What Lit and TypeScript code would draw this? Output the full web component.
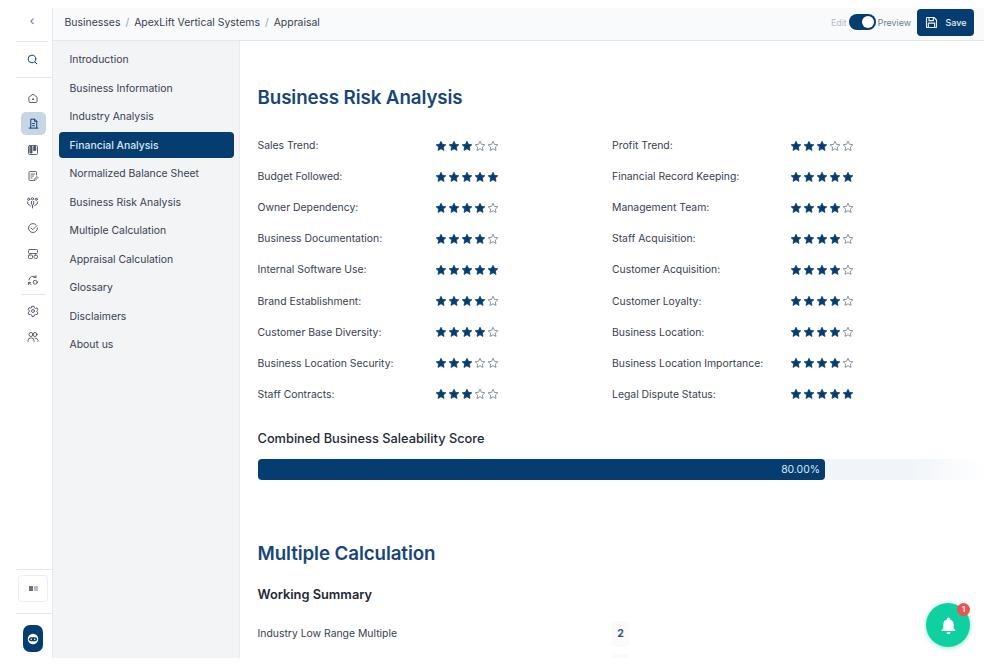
import { LitElement, html, css, svg } from "lit";
import { customElement } from "lit/decorators.js";

const NAV = ["Introduction","Business Information","Industry Analysis","Financial Analysis","Normalized Balance Sheet","Business Risk Analysis","Multiple Calculation","Appraisal Calculation","Glossary","Disclaimers","About us"];
const RISKS: [string, number, string, number][] = [
  ["Sales Trend:",3,"Profit Trend:",3],
  ["Budget Followed:",5,"Financial Record Keeping:",5],
  ["Owner Dependency:",4,"Management Team:",4],
  ["Business Documentation:",4,"Staff Acquisition:",4],
  ["Internal Software Use:",5,"Customer Acquisition:",4],
  ["Brand Establishment:",4,"Customer Loyalty:",4],
  ["Customer Base Diversity:",4,"Business Location:",4],
  ["Business Location Security:",3,"Business Location Importance:",4],
  ["Staff Contracts:",3,"Legal Dispute Status:",5],
];
const STAR = "M12 2.5l2.9 6.2 6.8.8-5 4.7 1.3 6.7-6-3.4-6 3.4 1.3-6.7-5-4.7 6.8-.8z";

const ico = (body: unknown, size = 13) => html`<svg width=${size} height=${size} viewBox="0 0 24 24" fill="none" stroke="currentColor" stroke-width="1.8" stroke-linecap="round" stroke-linejoin="round">${body}</svg>`;

const ICONS = {
  home: svg`<path d="M4 10.5 12 4l8 6.5V19a2 2 0 0 1-2 2H6a2 2 0 0 1-2-2z"/><circle cx="12" cy="14.5" r="1.2" fill="currentColor"/>`,
  doc: svg`<path d="M7 20V4h7l4 4v12"/><path d="M14 4v4h4"/><path d="M4 20.5h16"/><path d="M10.5 12h3M10.5 16h3"/>`,
  kanban: svg`<rect x="3" y="3" width="18" height="18" rx="2"/><rect x="6.5" y="5" width="3.5" height="13" fill="currentColor"/><rect x="14" y="5" width="3.5" height="8" fill="currentColor"/>`,
  edit: svg`<path d="M19 10V5a2 2 0 0 0-2-2H6a2 2 0 0 0-2 2v14a2 2 0 0 0 2 2h5"/><path d="M8 8h7M8 12h5M8 16h2"/><path d="m14 19 6-6 2 2-6 6h-2z"/>`,
  team: svg`<circle cx="5" cy="6" r="2"/><circle cx="12" cy="5" r="2"/><circle cx="19" cy="6" r="2"/><path d="M3 11v3l5 4M10 10v5l2 2v5M14 10v5l-2 2M21 11v3l-5 4"/>`,
  check: svg`<path d="M21 12a9 9 0 1 1-3.5-7.1"/><path d="m8 12 3.500 3.500L20 7"/>`,
  layout: svg`<rect x="3" y="3" width="18" height="8" rx="2"/><rect x="3" y="14" width="8" height="7" rx="1.500"/><rect x="14" y="14" width="7" height="7" rx="3"/>`,
  refresh: svg`<path d="M4 12a8 8 0 0 1 14-5"/><path d="M18 3v4h-4"/><path d="M3 21v-4h4"/><path d="M3 17a8 8 0 0 0 5 4"/><circle cx="16.500" cy="16.500" r="4"/>`,
  gear: svg`<circle cx="12" cy="12" r="3"/><path d="M10 2.500h4l.6 3 2.500 1.400 2.900-1 2 3.500-2.300 2 .1 1.300-.1 1.300 2.300 2-2 3.500-2.900-1-2.500 1.400-.6 3h-4l-.6-3-2.500-1.400-2.900 1-2-3.500 2.300-2L4.200 12l.1-1.300-2.300-2 2-3.500 2.900 1 2.500-1.400z"/>`,
  users: svg`<circle cx="8" cy="7" r="4"/><circle cx="16" cy="7" r="4"/><path d="M2 21v-2a5 5 0 0 1 5-5h2a5 5 0 0 1 5 5v2"/><path d="M16 14a6 6 0 0 1 6 5v2"/>`,
};

@customElement("app-root")
export class AppRoot extends LitElement {
  static styles = css`
    :host { display: block; width: 1000px; height: 666px; overflow: hidden; background: #fff; font-family: Inter, "Liberation Sans", sans-serif; color: #374151; font-size: 11px; }
    * { box-sizing: border-box; }
    .frame { display: flex; height: 666px; padding: 8px 16px; }
    .rail { width: 37px; flex: none; display: flex; flex-direction: column; align-items: stretch; border-right: 1px solid #e5e7eb; color: #4b5563; }
    .cell { height: 26px; display: flex; align-items: center; justify-content: center; padding-right: 3px; }
    .back { height: 34px; border-bottom: 1px solid #e5e7eb; margin-right: 4px; padding: 0 0 8px; color: #6b7280; font-size: 12px; }
    .search { height: 36px; border-bottom: 1px solid #e5e7eb; color: #0f3f6e; }
    .group { display: flex; flex-direction: column; padding-top: 7px; }
    .active-ico { margin: 1px 6px 2px 5px; height: 23px; padding: 0; background: #c6d6e5; border-radius: 5px; color: #063d70; }
    .sep { height: 1px; background: #e5e7eb; margin: 1px 6px 3px 5px; }
    .spacer { flex: 1; }
    .box-wrap { border-top: 1px solid #e5e7eb; border-bottom: 1px solid #e5e7eb; padding: 5px 5px 11px 2px; }
    .box { height: 27px; width: 30px; border: 1px solid #eceef1; border-radius: 4px; display: flex; align-items: center; justify-content: center; gap: 1px; }
    .box i { display: block; width: 4px; height: 5px; background: #6b7280; }
    .box i + i { background: #b5bcc6; }
    .logo-wrap { padding: 11px 0 6px 7px; }
    .logo { width: 20px; height: 27px; border-radius: 7px; background: #063d70; display: flex; align-items: center; justify-content: center; }
    .main { flex: 1; min-width: 0; display: flex; flex-direction: column; }
    header { height: 33px; flex: none; background: #f9fafb; border-bottom: 1px solid #e5e7eb; display: flex; align-items: center; padding: 0 10px 4px 11.5px; font-size: 10.45px; color: #374151; }
    .crumbs { display: flex; gap: 5px; flex: 1; }
    .crumbs span { color: #9ca3af; }
    .mode { display: flex; align-items: center; gap: 2px; font-size: 8.9px; color: #6b7f94; margin-right: 6px; }
    .mode .off { color: #b6bdc7; }
    .toggle { width: 27px; height: 16px; border-radius: 8px; background: #063d70; display: flex; align-items: center; justify-content: flex-end; padding-right: 2px; }
    .toggle i { width: 12px; height: 12px; border-radius: 50%; background: #fff; display: block; }
    .save { width: 57px; height: 27px; background: #063d70; border-radius: 4px; color: #e8eef5; display: flex; align-items: center; justify-content: center; gap: 6px; font-size: 9px; font-weight: 500; }
    .body { flex: 1; min-height: 0; display: flex; }
    nav { width: 187px; flex: none; background: #f3f4f6; border-right: 1px solid #e8eaed; padding: 5px 5px 5px 6px; display: flex; flex-direction: column; gap: 2px; }
    nav div { height: 26.5px; display: flex; align-items: center; padding: 1px 0 0 10.5px; font-size: 10.4px; color: #374151; border-radius: 4px; }
    nav div.on { background: #063d70; color: #dbe6f0; font-weight: 500; }
    .content { flex: 1; min-width: 0; overflow: hidden; padding: 43px 0 0 17.5px; }
    h2 { margin: 0; font-size: 18.75px; line-height: 28px; font-weight: 600; color: #17477a; letter-spacing: -0.1px; }
    .risks { display: grid; grid-template-columns: 177.5px 177px 178px 1fr; margin-top: 18px; }
    .risks > * { height: 31.1px; display: flex; align-items: center; }
    .lab { font-size: 10.4px; color: #374151; }
    .stars { gap: 1px; margin-left: -0.5px; }
    .stars svg { display: block; }
    .score { margin-top: 19px; font-size: 12.8px; line-height: 20px; font-weight: 500; color: #1f2937; }
    .bar { margin-top: 10px; height: 21px; border-radius: 4px; background: linear-gradient(90deg, #f1f5f9 0%, #f1f5f9 90%, #fff 100%); }
    .fill { width: 78.1%; height: 100%; border-radius: 4px; background: #063d70; color: #dce6f0; font-size: 10.4px; display: flex; align-items: center; justify-content: flex-end; padding-right: 5px; }
    .h2b { margin-top: 60px; }
    h3 { margin: 17px 0 0; font-size: 12.8px; line-height: 20px; font-weight: 600; color: #1f2937; }
    .sum { display: grid; grid-template-columns: 354.5px 17px; row-gap: 7px; margin-top: 16px; align-items: center; }
    .val { height: 26px; background: #f8fafc; border-radius: 4px; display: flex; align-items: center; justify-content: center; font-weight: 700; font-size: 10.4px; color: #2c4f72; }
    .bell { position: absolute; left: 926px; top: 603px; width: 44px; height: 44px; border-radius: 50%; background: #0fd0a0; box-shadow: 0 1px 5px rgba(15, 208, 160, .45); display: flex; align-items: center; justify-content: center; }
    .badge { position: absolute; left: 31px; top: 0; width: 13px; height: 13px; border-radius: 50%; background: #ef5350; color: #fff; font-size: 7.500px; font-weight: 700; display: flex; align-items: center; justify-content: center; }
  `;

  private stars(n: number) {
    return html`<div class="stars">${[0,1,2,3,4].map(i => html`<svg width="12" height="12" viewBox="0 0 24 24">
      <path d=${STAR} fill=${i < n ? "#063d70" : "none"} stroke=${i < n ? "#063d70" : "#6b7a8c"} stroke-width=${i < n ? 1.5 : 1.6} stroke-linejoin="round"/></svg>`)}</div>`;
  }

  render() {
    return html`
      <div class="frame">
        <aside class="rail">
          <div class="cell back">‹</div>
          <div class="cell search">${ico(svg`<circle cx="11" cy="11" r="7"/><path d="m20 20-4-4"/>`)}</div>
          <div class="group">
            <div class="cell">${ico(ICONS.home, 12)}</div>
            <div class="cell active-ico">${ico(ICONS.doc, 13)}</div>
            <div class="cell">${ico(ICONS.kanban, 12)}</div>
            <div class="cell">${ico(ICONS.edit, 12)}</div>
            <div class="cell">${ico(ICONS.team, 13)}</div>
            <div class="cell">${ico(ICONS.check, 12)}</div>
            <div class="cell">${ico(ICONS.layout, 12)}</div>
            <div class="cell">${ico(ICONS.refresh, 12)}</div>
            <div class="sep"></div>
            <div class="cell">${ico(ICONS.gear, 12)}</div>
            <div class="cell">${ico(ICONS.users, 12)}</div>
          </div>
          <div class="spacer"></div>
          <div class="box-wrap"><div class="box"><i></i><i></i></div></div>
          <div class="logo-wrap"><div class="logo">
            <svg width="14" height="14" viewBox="0 0 24 24"><path d="M12 3a9 9 0 0 1 9 9 9 9 0 0 1-9 9 9 9 0 0 1-9-9 9 9 0 0 1 9-9z" fill="#fff"/><rect x="5" y="9" width="14" height="7" rx="3.500" fill="#063d70"/><circle cx="9" cy="12.500" r="1.300" fill="#fff"/><circle cx="15" cy="12.500" r="1.300" fill="#fff"/></svg>
          </div></div>
        </aside>
        <div class="main">
          <header>
            <div class="crumbs">Businesses <span>/</span> ApexLift Vertical Systems <span>/</span> Appraisal</div>
            <div class="mode"><span class="off">Edit</span><div class="toggle"><i></i></div><span>Preview</span></div>
            <div class="save">
              <svg width="15" height="15" viewBox="0 0 24 24" fill="none" stroke="currentColor" stroke-width="1.800" stroke-linejoin="round"><path d="M4 5a1 1 0 0 1 1-1h11l4 4v11a1 1 0 0 1-1 1H5a1 1 0 0 1-1-1z"/><path d="M8 4v5h7V4M7 20v-7h10v7"/></svg>
              Save
            </div>
          </header>
          <div class="body">
            <nav>${NAV.map(n => html`<div class=${n === "Financial Analysis" ? "on" : ""}>${n}</div>`)}</nav>
            <div class="content">
              <h2>Business Risk Analysis</h2>
              <div class="risks">
                ${RISKS.map(r => html`<div class="lab">${r[0]}</div>${this.stars(r[1])}<div class="lab">${r[2]}</div>${this.stars(r[3])}`)}
              </div>
              <div class="score">Combined Business Saleability Score</div>
              <div class="bar"><div class="fill">80.00%</div></div>
              <h2 class="h2b">Multiple Calculation</h2>
              <h3>Working Summary</h3>
              <div class="sum">
                <div class="lab">Industry Low Range Multiple</div><div class="val">2</div>
                <div></div><div class="val"></div>
              </div>
            </div>
          </div>
        </div>
      </div>
      <div class="bell">
        <svg width="19" height="19" viewBox="0 0 24 24" fill="#fff"><path d="M12 2a2 2 0 0 0-2 2v.500A6.500 6.500 0 0 0 5.500 11v4L3 18.500V19h18v-.500L18.500 15v-4A6.500 6.500 0 0 0 14 4.500V4a2 2 0 0 0-2-2z"/><path d="M9.500 20.500a2.500 2.500 0 0 0 5 0z"/></svg>
        <div class="badge">1</div>
      </div>
    `;
  }
}
